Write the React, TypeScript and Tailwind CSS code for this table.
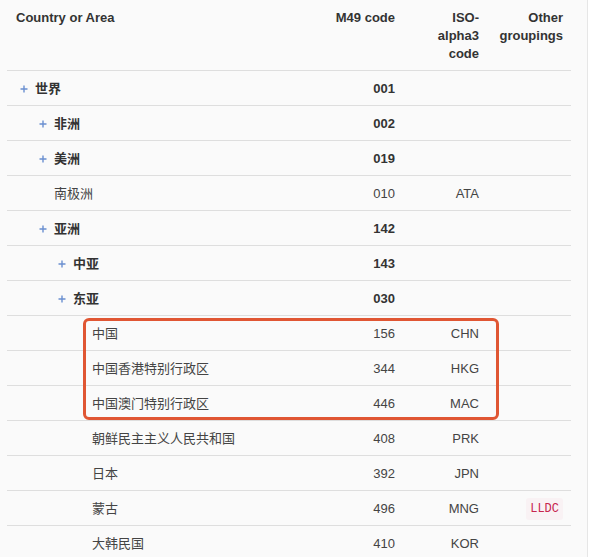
import type { ReactNode } from 'react';

interface AreaRow {
  name: string;
  level: number;
  code: string;
  iso?: string;
  group?: string;
  expandable?: boolean;
}

const rows: AreaRow[] = [
  { name: '世界', level: 0, code: '001', expandable: true },
  { name: '非洲', level: 1, code: '002', expandable: true },
  { name: '美洲', level: 1, code: '019', expandable: true },
  { name: '南极洲', level: 1, code: '010', iso: 'ATA' },
  { name: '亚洲', level: 1, code: '142', expandable: true },
  { name: '中亚', level: 2, code: '143', expandable: true },
  { name: '东亚', level: 2, code: '030', expandable: true },
  { name: '中国', level: 3, code: '156', iso: 'CHN' },
  { name: '中国香港特别行政区', level: 3, code: '344', iso: 'HKG' },
  { name: '中国澳门特别行政区', level: 3, code: '446', iso: 'MAC' },
  { name: '朝鲜民主主义人民共和国', level: 3, code: '408', iso: 'PRK' },
  { name: '日本', level: 3, code: '392', iso: 'JPN' },
  { name: '蒙古', level: 3, code: '496', iso: 'MNG', group: 'LLDC' },
  { name: '大韩民国', level: 3, code: '410', iso: 'KOR' },
];

const indentClass = ['pl-[13px]', 'pl-[32px]', 'pl-[51px]', 'pl-[70px]'];

function PlusIcon() {
  return (
    <svg width="8" height="8" viewBox="0 0 8 8">
      <path d="M4 0.5v7M0.5 4h7" stroke="#6a8fd0" strokeWidth="1.4" />
    </svg>
  );
}

function Cell({ children, className = '' }: { children?: ReactNode; className?: string }) {
  return <div className={`flex items-center px-2 ${className}`}>{children}</div>;
}

export default function App() {
  return (
    <div
      className="flex h-[557px] w-[590px] overflow-hidden bg-white text-[13px] text-[#333]"
      style={{ fontFamily: '"Liberation Sans", Arial, "Noto Sans CJK SC", sans-serif' }}
    >
      <div className="h-full w-[588px] border-r border-[#e6e6e6] bg-[#fafafa] pl-[7px] pr-[16px]">
        <div className="grid h-[71px] grid-cols-[1fr_100px_84px_84px] border-b border-[#dedede] pt-[9px] font-bold leading-[18px]">
          <div className="pl-[9px]">Country or Area</div>
          <div className="px-2 text-right">M49 code</div>
          <div className="px-2 text-right">
            <span className="ml-auto block w-[52px]">ISO-alpha3 code</span>
          </div>
          <div className="px-2 text-right">Other groupings</div>
        </div>

        <div className="relative">
          {rows.map((row) => {
            const bold = row.expandable ? 'font-bold text-[#333]' : 'text-[#444]';
            return (
              <div
                key={row.code}
                className={`grid h-[35px] grid-cols-[1fr_100px_84px_84px] border-b border-[#dedede] pt-px ${bold}`}
              >
                <div className={`flex items-center ${indentClass[row.level]}`}>
                  <span className="flex w-[15px] items-center">{row.expandable ? <PlusIcon /> : null}</span>
                  <span>{row.name}</span>
                </div>
                <Cell className="justify-end">{row.code}</Cell>
                <Cell className="justify-end">{row.iso}</Cell>
                <Cell className="justify-end">
                  {row.group ? (
                    <code
                      className="rounded-[3px] bg-[#f9f2f4] px-1 py-[2px] text-[12px] text-[#c7254e]"
                      style={{ fontFamily: '"Liberation Mono", "DejaVu Sans Mono", monospace' }}
                    >
                      {row.group}
                    </code>
                  ) : null}
                </Cell>
              </div>
            );
          })}

          <div className="pointer-events-none absolute left-[76px] top-[247px] h-[102px] w-[416px] rounded-[6px] border-[3px] border-[#e05633]" />
        </div>
      </div>
    </div>
  );
}
